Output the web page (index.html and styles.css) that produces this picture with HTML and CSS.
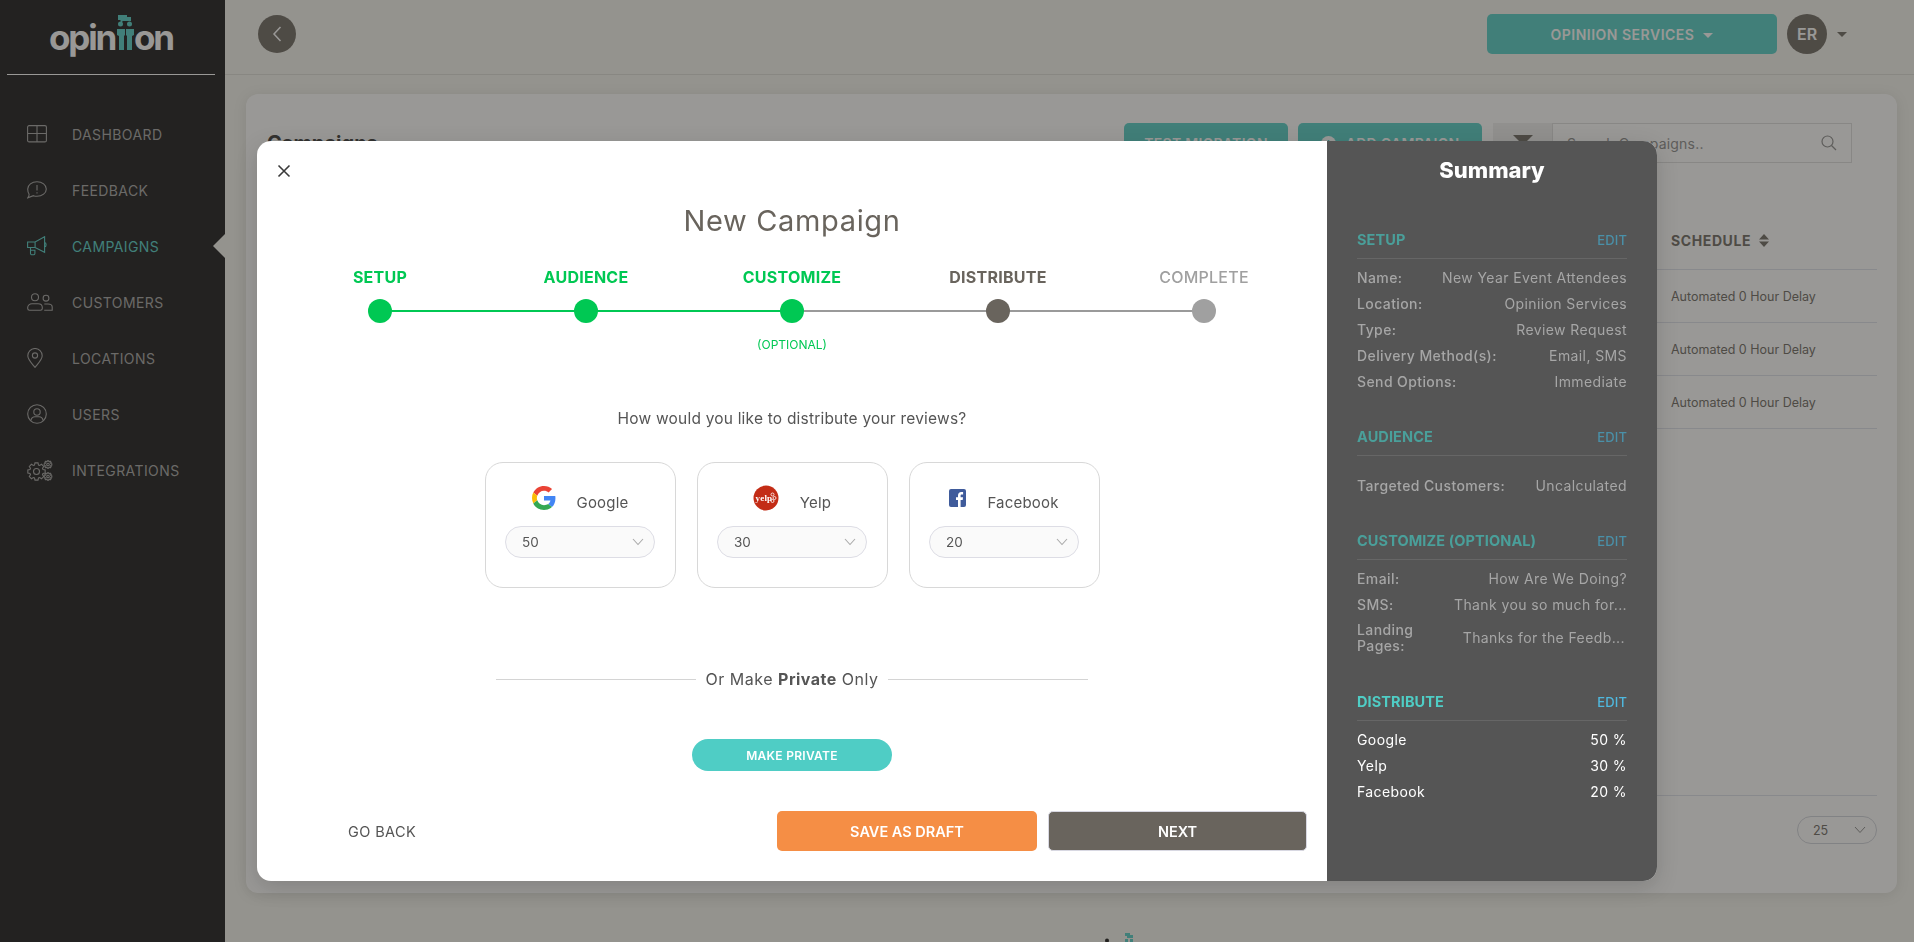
FILE: index.html
```html
<!DOCTYPE html>
<html lang="en">
<head>
    <meta charset="UTF-8">
    <title>Opiniion - New Campaign</title>
    <link rel="stylesheet" href="styles.css">
</head>
<body>
    <aside class="sidebar">
        <div class="logo-wrap">
            <div class="logo">
                <span>opin</span>
                <svg class="logo-mark" width="18" height="36" viewBox="0 0 18 36">
                    <path fill="#4fcdc5" d="M1 0h9v2h4v4H6L3.500 8V5H1zM1 9a2.500 2.500 0 1 1 5 0 2.500 2.500 0 1 1-5 0zM10 9a2.500 2.500 0 1 1 5 0 2.500 2.500 0 1 1-5 0z"/>
                    <path fill="#4fcdc5" d="M0 14h8v6l-1 1v14H2V21l-2-1zM9 14h8v6l-2 1v14h-5V21l-1-1z"/>
                </svg>
                <span>on</span>
            </div>
        </div>
        <nav class="nav">
            <a class="nav-item">
                <svg width="20" height="18" viewBox="0 0 20 18"><rect x=".6" y=".6" width="18.800" height="16.300" rx="1.500"/><path d="M10 .6v16.300M.6 8.500h18.800"/></svg>
                <span>DASHBOARD</span>
            </a>
            <a class="nav-item">
                <svg width="20" height="18" viewBox="0 0 20 18"><path d="M10 .7c5.200 0 9.300 3.200 9.300 7.300s-4.100 7.300-9.300 7.300c-1.300 0-2.500-.2-3.600-.6L.8 16.800c.8-1.100 1.300-2.300 1.300-3.600C1.100 11.800.7 10 .7 8 .7 3.900 4.800.7 10 .7z"/><path d="M10 4v5.500M10 11.300v1.200"/></svg>
                <span>FEEDBACK</span>
            </a>
            <a class="nav-item active">
                <svg width="22" height="20" viewBox="0 0 22 20"><path d="M.6 6h7.500l9.500-5.300v15.600L8.100 11.500H.6zM8.100 6v5.500M17.600 6.500c2 .3 2 4 0 4.400M3.500 11.500v6c0 .8.500 1.200 1.200 1.200h2c.8 0 1.200-.5 1.200-1.200v-3.200H3.500"/></svg>
                <span>CAMPAIGNS</span>
            </a>
            <a class="nav-item">
                <svg width="26" height="18" viewBox="0 0 26 18"><circle cx="8" cy="4.200" r="3.500"/><path d="M2.500 17.300h11c1 0 1.800-.7 1.800-1.700v-1c0-2.300-2-3.800-4.300-3.800H5c-2.400 0-4.300 1.500-4.300 3.800v1c0 1 .8 1.700 1.800 1.700z"/><circle cx="19" cy="5.200" r="2.900"/><path d="M17.300 11h3.700c2.300 0 4.200 1.100 4.200 3v3.300h-8"/></svg>
                <span>CUSTOMERS</span>
            </a>
            <a class="nav-item">
                <svg width="16" height="20" viewBox="0 0 16 20"><path d="M8 19.300C4.500 15 .8 11.500.8 7.700a7.200 7.200 0 0 1 14.400 0c0 3.800-3.700 7.300-7.200 11.600z"/><circle cx="8" cy="7.500" r="2.600"/></svg>
                <span>LOCATIONS</span>
            </a>
            <a class="nav-item">
                <svg width="20" height="20" viewBox="0 0 20 20"><circle cx="10" cy="10" r="9.300"/><circle cx="10" cy="8" r="3.200"/><path d="M3.800 16.500c.6-2.400 2.500-3.800 4.200-3.800h4c1.800 0 3.600 1.400 4.200 3.800"/></svg>
                <span>USERS</span>
            </a>
            <a class="nav-item">
                <svg width="26" height="21" viewBox="0 0 26 21">
                    <defs>
                        <path id="gear" d="M6.500-1.990L8.670-1.530V1.530L6.500 1.990L6 3.190L7.210 5.050L5.050 7.210L3.190 6L1.990 6.500L1.530 8.670H-1.530L-1.990 6.500L-3.190 6L-5.050 7.210L-7.210 5.050L-6 3.190L-6.500 1.990L-8.670 1.530V-1.530L-6.500-1.990L-6-3.190L-7.210-5.050L-5.050-7.210L-3.190-6L-1.990-6.500L-1.530-8.670H1.530L1.990-6.500L3.190-6L5.050-7.210L7.210-5.050L6-3.190z"/>
                    </defs>
                    <use href="#gear" transform="translate(9.500 11.500)"/>
                    <circle cx="9.500" cy="11.500" r="3"/>
                    <use href="#gear" transform="translate(21 4.500) scale(.44)"/>
                    <circle cx="21" cy="4.500" r="1.300"/>
                    <use href="#gear" transform="translate(21 16.500) scale(.44)"/>
                    <circle cx="21" cy="16.500" r="1.300"/>
                </svg>
                <span>INTEGRATIONS</span>
            </a>
        </nav>
    </aside>

    <div class="main">
        <header class="topbar">
            <button class="back-btn">
                <svg width="12" height="18" viewBox="0 0 12 18"><path d="M9.500 2L3 9l6.500 7"/></svg>
            </button>
            <div class="topbar-right">
                <button class="services-btn">OPINIION SERVICES <i class="caret"></i></button>
                <div class="avatar">ER</div>
                <i class="caret caret-dark"></i>
            </div>
        </header>

        <section class="card">
            <div class="card-head">
                <h2>Campaigns</h2>
                <div class="card-actions">
                    <button class="teal-btn test-btn">TEST MIGRATION</button>
                    <button class="teal-btn add-btn">
                        <svg width="15" height="15" viewBox="0 0 15 15"><circle cx="7.500" cy="7.500" r="7.500" fill="#fff"/><path d="M7.500 4v7M4 7.500h7" stroke="#4fcdc5" stroke-width="1.500"/></svg>
                        <span>ADD CAMPAIGN</span>
                    </button>
                    <div class="filter-box"><i class="filter-arrow"></i></div>
                    <div class="search-box">
                        <span>Search Campaigns..</span>
                        <svg width="16" height="16" viewBox="0 0 16 16"><circle cx="6.500" cy="6.500" r="5.500"/><path d="M10.500 10.500L15 15"/></svg>
                    </div>
                </div>
            </div>
            <div class="table">
                <div class="table-row table-header">
                    <span>SCHEDULE</span>
                    <svg width="10" height="13" viewBox="0 0 10 13"><path d="M5 0l5 5.500H0zM5 13L0 7.500h10z"/></svg>
                </div>
                <div class="table-row">Automated 0 Hour Delay</div>
                <div class="table-row">Automated 0 Hour Delay</div>
                <div class="table-row">Automated 0 Hour Delay</div>
            </div>
            <div class="table-foot">
                <div class="page-select">
                    <span>25</span>
                    <svg width="12" height="8" viewBox="0 0 12 8"><path d="M1 1l5 5.500L11 1"/></svg>
                </div>
            </div>
        </section>

        <footer class="page-foot">
            <svg width="32" height="10" viewBox="0 0 32 10"><circle cx="2" cy="7.500" r="2" fill="#111"/><path fill="#4fcdc5" d="M20 0h5v2h3v3h-6V3h-2zM20 6h3v4h-3zM25 6h3v4h-3z"/></svg>
        </footer>
    </div>

    <div class="overlay">
        <div class="modal">
            <div class="modal-main">
                <button class="close-btn">
                    <svg width="14" height="14" viewBox="0 0 14 14"><path d="M1.500 1.500l11 11M12.500 1.500l-11 11"/></svg>
                </button>
                <h1 class="modal-title">New Campaign</h1>

                <div class="stepper">
                    <div class="step done"><span class="step-label">SETUP</span><i class="dot"></i></div>
                    <div class="step done"><span class="step-label">AUDIENCE</span><i class="dot"></i></div>
                    <div class="step done current"><span class="step-label">CUSTOMIZE</span><i class="dot"></i><small>(OPTIONAL)</small></div>
                    <div class="step active"><span class="step-label">DISTRIBUTE</span><i class="dot"></i></div>
                    <div class="step todo"><span class="step-label">COMPLETE</span><i class="dot"></i></div>
                </div>

                <p class="question">How would you like to distribute your reviews?</p>

                <div class="sites">
                    <div class="site">
                        <div class="site-name">
                            <svg width="24" height="24" viewBox="0 0 48 48">
                                <path fill="#ea4335" d="M24 9.500c3.500 0 6.700 1.200 9.200 3.600l6.900-6.900C35.900 2.400 30.500 0 24 0 14.600 0 6.500 5.400 2.600 13.200l8 6.200C12.500 13.700 17.800 9.500 24 9.500z"/>
                                <path fill="#4285f4" d="M46.900 24.500c0-1.600-.1-3.100-.4-4.500H24v9h12.900c-.6 3-2.200 5.500-4.700 7.200l7.700 6c4.500-4.100 7-10.200 7-17.700z"/>
                                <path fill="#fbbc05" d="M10.500 28.600c-.5-1.400-.8-3-.8-4.600s.3-3.200.8-4.600l-8-6.200C.9 16.500 0 20.100 0 24s.9 7.500 2.600 10.800z"/>
                                <path fill="#34a853" d="M24 48c6.500 0 11.900-2.100 15.900-5.800l-7.700-6c-2.200 1.400-4.900 2.300-8.200 2.300-6.200 0-11.500-4.200-13.400-9.900l-8 6.200C6.500 42.600 14.600 48 24 48z"/>
                            </svg>
                            <span>Google</span>
                        </div>
                        <div class="select">
                            <span>50</span>
                            <svg width="12" height="8" viewBox="0 0 12 8"><path d="M1 1l5 5.500L11 1"/></svg>
                        </div>
                    </div>
                    <div class="site">
                        <div class="site-name">
                            <svg width="26" height="26" viewBox="0 0 26 26">
                                <circle cx="13" cy="13" r="12.500" fill="#c32c16"/>
                                <text x="2.500" y="16" class="yelp-text">yelp</text>
                                <circle cx="19.500" cy="9.500" r="1.500" fill="none" stroke="#fff" stroke-width=".8"/>
                                <circle cx="21.500" cy="13" r="1.500" fill="none" stroke="#fff" stroke-width=".8"/>
                                <circle cx="19.500" cy="16" r="1.500" fill="none" stroke="#fff" stroke-width=".8"/>
                            </svg>
                            <span>Yelp</span>
                        </div>
                        <div class="select">
                            <span>30</span>
                            <svg width="12" height="8" viewBox="0 0 12 8"><path d="M1 1l5 5.500L11 1"/></svg>
                        </div>
                    </div>
                    <div class="site">
                        <div class="site-name">
                            <svg width="17" height="18" viewBox="0 0 17 18">
                                <rect width="17" height="18" rx="2" fill="#3f5b9b"/>
                                <path fill="#fff" d="M9 18v-7H7V8.300h2V6.500C9 4.300 10.300 3 12.300 3c.9 0 1.500.1 1.800.1v2.400h-1.300c-1 0-1.200.5-1.200 1.200v1.600h2.400l-.3 2.700h-2.100v7z"/>
                            </svg>
                            <span>Facebook</span>
                        </div>
                        <div class="select">
                            <span>20</span>
                            <svg width="12" height="8" viewBox="0 0 12 8"><path d="M1 1l5 5.500L11 1"/></svg>
                        </div>
                    </div>
                </div>

                <div class="or-line"><span>Or Make <b>Private</b> Only</span></div>

                <button class="private-btn">MAKE PRIVATE</button>

                <div class="modal-foot">
                    <button class="go-back">GO BACK</button>
                    <div class="foot-btns">
                        <button class="draft-btn">SAVE AS DRAFT</button>
                        <button class="next-btn">NEXT</button>
                    </div>
                </div>
            </div>

            <aside class="summary">
                <h2 class="summary-title">Summary</h2>

                <div class="sum-head"><span>SETUP</span><a>EDIT</a></div>
                <div class="sum-rows">
                    <div class="sum-row"><span>Name:</span><span>New Year Event Attendees</span></div>
                    <div class="sum-row"><span>Location:</span><span>Opiniion Services</span></div>
                    <div class="sum-row"><span>Type:</span><span>Review Request</span></div>
                    <div class="sum-row"><span>Delivery Method(s):</span><span>Email, SMS</span></div>
                    <div class="sum-row"><span>Send Options:</span><span>Immediate</span></div>
                </div>

                <div class="sum-head"><span>AUDIENCE</span><a>EDIT</a></div>
                <div class="sum-rows targeted">
                    <div class="sum-row"><span>Targeted Customers:</span><span>Uncalculated</span></div>
                </div>

                <div class="sum-head"><span>CUSTOMIZE (OPTIONAL)</span><a>EDIT</a></div>
                <div class="sum-rows">
                    <div class="sum-row"><span>Email:</span><span>How Are We Doing?</span></div>
                    <div class="sum-row"><span>SMS:</span><span>Thank you so much for...</span></div>
                    <div class="sum-row tall"><span class="wrap-label">Landing Pages:</span><span class="short-val">Thanks for the Feedb...</span></div>
                </div>

                <div class="sum-head current"><span>DISTRIBUTE</span><a>EDIT</a></div>
                <div class="sum-rows current">
                    <div class="sum-row"><span>Google</span><span>50 %</span></div>
                    <div class="sum-row"><span>Yelp</span><span>30 %</span></div>
                    <div class="sum-row"><span>Facebook</span><span>20 %</span></div>
                </div>
            </aside>
        </div>
    </div>
</body>
</html>
```

FILE: styles.css
```css
* {
    box-sizing: border-box;
}

body {
    display: flex;
    height: 942px;
    margin: 0;
    overflow: hidden;
    background-color: #f4f4ee;
    color: #333;
    font-family: Inter, "Noto Sans", sans-serif;
}

button {
    border: none;
    font-family: inherit;
    cursor: pointer;
}

svg {
    display: block;
    flex-shrink: 0;
}

/* sidebar */
.sidebar {
    position: relative;
    width: 225px;
    flex-shrink: 0;
    background-color: #121214;
}

.sidebar::after {
    content: "";
    position: absolute;
    right: 0;
    top: 234px;
    border: 12.5px solid transparent;
    border-right-color: #f4f4ee;
    border-left-width: 0;
}

.logo-wrap {
    height: 75px;
    margin: 0 10px 0 7px;
    padding: 15px 0 0 42px;
    border-bottom: 1px solid #fff;
}

.logo {
    display: flex;
    align-items: flex-start;
    color: #fff;
    font-size: 35px;
    font-weight: 700;
    line-height: 44px;
    letter-spacing: -2.200px;
}

.logo-mark {
    margin: 0 -1px 0 2px;
}

.nav {
    padding-top: 31px;
}

.nav-item {
    display: flex;
    align-items: center;
    height: 56px;
    padding-left: 27px;
    color: #a2a2a2;
    font-size: 14px;
    letter-spacing: .4px;
}

.nav-item svg {
    fill: none;
    stroke: #a2a2a2;
    stroke-width: 1.1;
}

.nav-item svg path {
    vector-effect: non-scaling-stroke;
}

.nav-item span {
    position: absolute;
    left: 72px;
}

.nav-item.active {
    color: #4fcdc5;
}

.nav-item.active svg {
    stroke: #4fcdc5;
}

/* page behind the modal */
.main {
    flex: 1;
    min-width: 0;
}

.topbar {
    display: flex;
    align-items: center;
    justify-content: space-between;
    height: 75px;
    padding: 0 67px 6px 33px;
    border-bottom: 1px solid #dcdcd6;
}

.back-btn {
    display: flex;
    align-items: center;
    justify-content: center;
    width: 38px;
    height: 38px;
    padding: 0;
    border-radius: 50%;
    background-color: #69645d;
}

.back-btn svg {
    fill: none;
    stroke: #fff;
    stroke-width: 1.5;
}

.topbar-right {
    display: flex;
    align-items: center;
}

.services-btn {
    width: 290px;
    height: 40px;
    border-radius: 5px;
    background-color: #4fcdc5;
    color: #fff;
    font-size: 14px;
    font-weight: 600;
    letter-spacing: .5px;
}

.caret {
    display: inline-block;
    margin-left: 5px;
    border: 5px solid transparent;
    border-top-color: #fff;
    border-bottom-width: 0;
    vertical-align: 2px;
}

.caret-dark {
    margin-left: 10px;
    border-top-color: #69645d;
}

.avatar {
    width: 40px;
    height: 40px;
    margin-left: 10px;
    border-radius: 50%;
    background-color: #69645d;
    color: #fff;
    font-size: 16px;
    font-weight: 600;
    line-height: 40px;
    text-align: center;
}

.card {
    height: 799px;
    margin: 19px 17px 0 21px;
    padding: 29px 20px 0 21px;
    border-radius: 12px;
    background-color: #fff;
    box-shadow: 0 2px 14px rgba(0, 0, 0, .1);
}

.card-head {
    display: flex;
    align-items: center;
    justify-content: space-between;
    height: 40px;
    padding-right: 25px;
}

.card-head h2 {
    margin: 0;
    font-size: 20px;
    font-weight: 700;
}

.card-actions {
    display: flex;
    height: 40px;
}

.teal-btn {
    height: 40px;
    border-radius: 5px;
    background-color: #4fcdc5;
    color: #fff;
    font-size: 14px;
    font-weight: 600;
    letter-spacing: .3px;
}

.test-btn {
    width: 164px;
    margin-right: 10px;
}

.add-btn {
    display: flex;
    align-items: center;
    justify-content: center;
    gap: 10px;
    width: 184px;
    margin-right: 11px;
}

.filter-box {
    display: flex;
    justify-content: center;
    width: 59px;
    padding-top: 12px;
    background-color: #efefef;
}

.filter-arrow {
    height: 0;
    border: 10px solid transparent;
    border-top: 10px solid #69645d;
    border-bottom: 0;
}

.search-box {
    display: flex;
    align-items: center;
    justify-content: space-between;
    width: 300px;
    padding: 0 14px;
    border: 1px solid #ddd;
    color: #888;
    font-size: 14px;
    letter-spacing: .2px;
}

.search-box svg {
    fill: none;
    stroke: #888;
    stroke-width: 1.2;
}

.table {
    margin-top: 20px;
}

.table-row {
    display: flex;
    align-items: center;
    height: 53px;
    padding-left: 1404px;
    border-bottom: 1px solid #dde0ea;
    color: #69645d;
    font-size: 12.500px;
}

.table-header {
    gap: 8px;
    height: 87px;
    padding-top: 28px;
    font-size: 14px;
    font-weight: 700;
    letter-spacing: .6px;
}

.table-header svg {
    fill: #69645d;
}

.table-foot {
    display: flex;
    justify-content: flex-end;
    height: 82px;
    margin-top: 366px;
    padding-top: 20px;
    border-top: 1px solid #dde0ea;
}

.page-select {
    display: flex;
    align-items: center;
    justify-content: space-between;
    width: 80px;
    height: 28px;
    padding: 0 10px 0 15px;
    border: 1px solid #cfd2da;
    border-radius: 14px;
    color: #69645d;
    font-size: 12.500px;
}

.page-select svg {
    fill: none;
    stroke: #888;
}

.page-foot {
    padding: 40px 0 0 880px;
}

/* modal */
.overlay {
    position: fixed;
    inset: 0;
    display: flex;
    justify-content: center;
    padding-top: 141px;
    background-color: rgba(52, 50, 46, .5);
}

.modal {
    display: flex;
    width: 1400px;
    height: 740px;
    border-radius: 14px;
    overflow: hidden;
    background-color: #fff;
    box-shadow: 0 6px 22px rgba(0, 0, 0, .15);
}

.modal-main {
    display: flex;
    flex-direction: column;
    align-items: center;
    width: 1070px;
    padding: 23px 20px 0;
}

.close-btn {
    align-self: flex-start;
    height: 14px;
    padding: 0;
    background: none;
}

.close-btn svg {
    fill: none;
    stroke: #3a3a3a;
    stroke-width: 1.6;
}

.modal-title {
    margin: 25px 0 0;
    color: #69645d;
    font-size: 29px;
    font-weight: 400;
    line-height: 36px;
    letter-spacing: .65px;
}

.stepper {
    display: flex;
    width: 1030px;
    margin-top: 28px;
}

.step {
    position: relative;
    display: flex;
    flex-direction: column;
    align-items: center;
    width: 206px;
    height: 86px;
}

.step-label {
    font-size: 16px;
    font-weight: 700;
    line-height: 20px;
    letter-spacing: .25px;
}

.dot {
    position: relative;
    z-index: 1;
    width: 24px;
    height: 24px;
    margin-top: 12px;
    border-radius: 50%;
}

.step small {
    margin-top: 14px;
    font-size: 12px;
    line-height: 16px;
}

.step:not(:last-child)::after {
    content: "";
    position: absolute;
    top: 43px;
    left: 50%;
    width: 206px;
    height: 2px;
    background-color: #9a9a9a;
}

.done .step-label,
.done small {
    color: #00c853;
}

.done small {
    font-weight: 400;
}

.done .dot {
    background-color: #00c853;
}

.done:not(.current)::after {
    background-color: #00c853;
}

.active .step-label {
    color: #69645d;
}

.active .dot {
    background-color: #69645d;
}

.todo .step-label {
    color: #a0a0a0;
    font-weight: 500;
}

.todo .dot {
    background-color: #a0a0a0;
}

.question {
    margin: 56px 0 0;
    color: #555;
    font-size: 15.500px;
    line-height: 20px;
    letter-spacing: .2px;
}

.sites {
    display: flex;
    gap: 21px;
    margin-top: 33px;
}

.site {
    display: flex;
    flex-direction: column;
    align-items: center;
    width: 191px;
    height: 126px;
    padding-top: 21px;
    border: 1px solid #d8d8d8;
    border-radius: 18px;
}

.site-name {
    display: flex;
    align-items: center;
    gap: 21px;
    height: 28px;
    color: #555;
    font-size: 15px;
    letter-spacing: .2px;
}

.site-name span {
    padding-top: 8px;
}

.yelp-text {
    fill: #fff;
    font-family: "Liberation Serif", serif;
    font-size: 9px;
    font-weight: 700;
}

.select {
    display: flex;
    align-items: center;
    justify-content: space-between;
    width: 150px;
    height: 32px;
    margin-top: 14px;
    padding: 0 10px 0 16px;
    border: 1px solid #dddde5;
    border-radius: 16px;
    background-color: #fafafa;
    color: #555;
    font-size: 13.500px;
}

.select svg {
    fill: none;
    stroke: #aaa;
    stroke-width: 1.1;
}

.or-line {
    display: flex;
    align-items: center;
    gap: 10px;
    width: 592px;
    margin-top: 81px;
    color: #555;
    font-size: 16px;
    line-height: 20px;
    letter-spacing: .5px;
}

.or-line::before,
.or-line::after {
    content: "";
    flex: 1;
    height: 1px;
    background-color: #d4d4d4;
}

.private-btn {
    width: 200px;
    height: 32px;
    margin-top: 50px;
    border-radius: 16px;
    background-color: #4fcdc5;
    color: #fff;
    font-size: 12px;
    font-weight: 600;
    letter-spacing: .3px;
}

.modal-foot {
    display: flex;
    align-items: center;
    justify-content: space-between;
    align-self: stretch;
    height: 40px;
    margin-top: 40px;
}

.go-back {
    margin-left: 71px;
    padding: 0;
    background: none;
    color: #555;
    font-size: 14.500px;
    letter-spacing: .4px;
}

.foot-btns {
    display: flex;
    gap: 11px;
}

.draft-btn,
.next-btn {
    height: 40px;
    border-radius: 5px;
    color: #fff;
    font-size: 14.500px;
    font-weight: 600;
}

.draft-btn {
    width: 260px;
    background-color: #f58e45;
}

.next-btn {
    width: 259px;
    border: 1px solid #d8d8e2;
    background-color: #69645d;
}

/* summary panel */
.summary {
    flex: 1;
    padding: 15px 30px 0;
    background-color: #555;
}

.summary-title {
    margin: 0 0 46px;
    color: #fff;
    font-size: 22px;
    font-weight: 800;
    line-height: 28px;
    text-align: center;
}

.sum-head {
    display: flex;
    align-items: center;
    justify-content: space-between;
    height: 29px;
    padding-bottom: 8px;
    border-bottom: 1px solid #666;
    color: #4a9f9a;
    font-size: 14.500px;
    font-weight: 700;
    line-height: 20px;
    letter-spacing: .1px;
}

.sum-head a {
    color: #4a90a8;
    font-size: 13px;
    font-weight: 500;
}

.sum-head.current {
    color: #4fcdc5;
}

.sum-head.current a {
    color: #4fb8de;
}

.sum-rows {
    margin: 5px 0 33px;
    color: #a6a6a6;
    font-size: 14px;
    letter-spacing: .4px;
}

.sum-rows.targeted {
    margin-top: 16px;
}

.sum-rows.current {
    color: #fff;
}

.sum-row {
    display: flex;
    align-items: center;
    justify-content: space-between;
    height: 26px;
}

.sum-row span:first-child {
    font-weight: 500;
}

.sum-rows.current .sum-row span:first-child {
    font-weight: 400;
}

.sum-row.tall {
    height: 42px;
    line-height: 16px;
}

.wrap-label {
    width: 70px;
}

.short-val {
    padding-right: 2px;
}
```
